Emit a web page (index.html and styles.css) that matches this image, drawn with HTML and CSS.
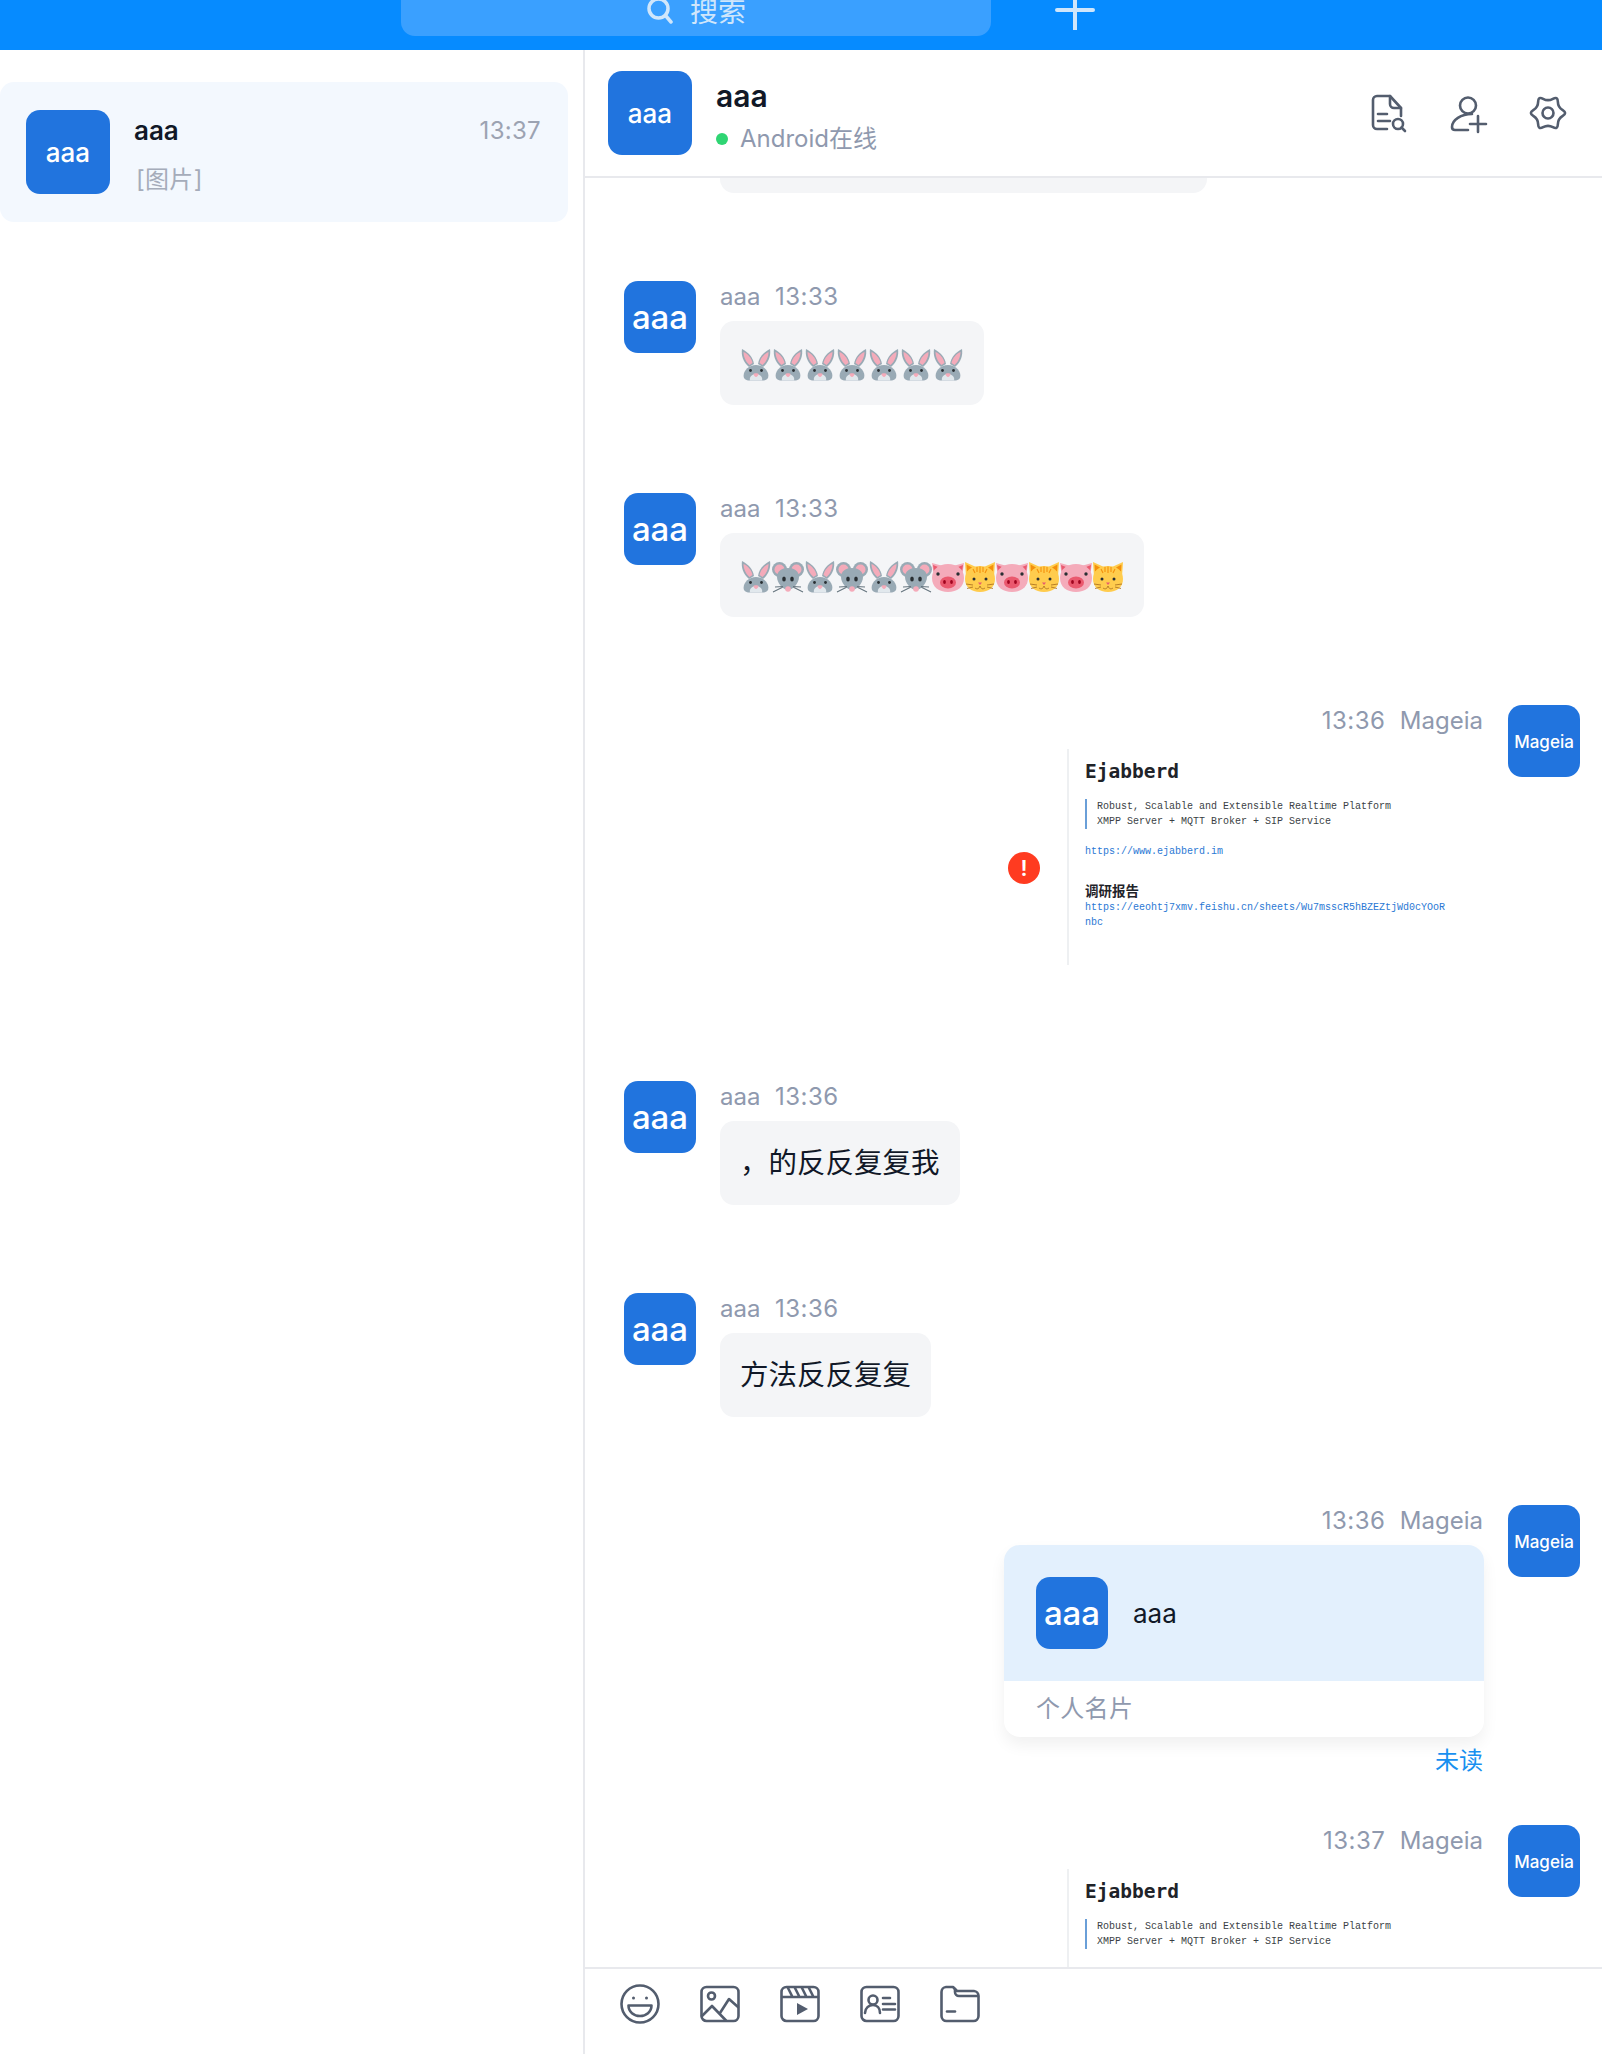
FILE: index.html
```html
<!DOCTYPE html>
<html lang="zh-CN">

<head>
    <meta charset="UTF-8">
    <meta name="viewport" content="width=device-width, initial-scale=1.0">
    <title>aaa</title>
    <link rel="stylesheet" href="styles.css">
</head>

<body>

    <!-- emoji sheet -->
    <svg class="defs" width="0" height="0">
        <symbol id="rabbit" viewBox="0 0 32 32">
            <path d="M2 0C1 6 3 13 9 18L14 15C13 8 8 3 2 0Z" fill="#99AAB5" />
            <path d="M3.5 3C3.5 8 6 13 9.5 16L12.5 14C11.5 9 8 5 3.5 3Z" fill="#F4ABBA" />
            <path d="M30 0C31 6 29 13 23 18L18 15C19 8 24 3 30 0Z" fill="#99AAB5" />
            <path d="M28.500 3C28.500 8 26 13 22.500 16L19.500 14C20.500 9 24 5 28.500 3Z" fill="#F4ABBA" />
            <path d="M4 29C2 23 8 16 16 16C24 16 30 23 28 29C27 31 24 31.500 23 31.500H9C8 31.500 5 31 4 29Z" fill="#99AAB5" />
            <path d="M10 31.500C9 28 12 25 16 25C20 25 23 28 22 31.500Z" fill="#E1E8ED" />
            <path d="M13.500 25C13.500 24 18.500 24 18.500 25C18.500 26.500 17 28 16 28C15 28 13.500 26.500 13.500 25Z" fill="#F4ABBA" />
            <circle cx="10.500" cy="21.500" r="1.400" fill="#292F33" />
            <circle cx="21.500" cy="21.500" r="1.400" fill="#292F33" />
        </symbol>
        <symbol id="mouse" viewBox="0 0 32 32">
            <circle cx="7.500" cy="8.500" r="7.500" fill="#99AAB5" />
            <circle cx="24.500" cy="8.500" r="7.500" fill="#99AAB5" />
            <circle cx="7.500" cy="8.500" r="5" fill="#F4ABBA" />
            <circle cx="24.500" cy="8.500" r="5" fill="#F4ABBA" />
            <path d="M5 16C5 10 10 7 16 7C22 7 27 10 27 16C27 22 21 29 16 29C11 29 5 22 5 16Z" fill="#99AAB5" />
            <ellipse cx="12" cy="18" rx="1.800" ry="2.600" fill="#292F33" />
            <ellipse cx="20" cy="18" rx="1.800" ry="2.600" fill="#292F33" />
            <path d="M1 31L11 26M3 26L11 25.500M31 31L21 26M29 26L21 25.500" stroke="#66757F" stroke-width="1.100" fill="none" />
            <circle cx="16" cy="28" r="2.800" fill="#F4ABBA" />
        </symbol>
        <symbol id="pig" viewBox="0 0 32 32">
            <path d="M0 2L11 5L2 16Z" fill="#F4ABBA" />
            <path d="M32 2L21 5L30 16Z" fill="#F4ABBA" />
            <path d="M1 4L6 6L2 11Z" fill="#EA596E" />
            <path d="M31 4L26 6L30 11Z" fill="#EA596E" />
            <path d="M0 17C0 8 7 3 16 3C25 3 32 8 32 17C32 26 25 31 16 31C7 31 0 26 0 17Z" fill="#F4ABBA" />
            <ellipse cx="16" cy="21.500" rx="8" ry="6" fill="#EA596E" />
            <ellipse cx="12.500" cy="21" rx="1.400" ry="2" fill="#A0041E" />
            <ellipse cx="19.500" cy="21" rx="1.400" ry="2" fill="#A0041E" />
            <circle cx="6" cy="13" r="1.700" fill="#292F33" />
            <circle cx="26" cy="13" r="1.700" fill="#292F33" />
        </symbol>
        <symbol id="cat" viewBox="0 0 32 32">
            <path d="M1 1L12 6L2 16Z" fill="#FFCC4D" />
            <path d="M31 1L20 6L30 16Z" fill="#FFCC4D" />
            <path d="M2.500 3.500L8 6.500L3 11Z" fill="#F4900C" />
            <path d="M29.500 3.500L24 6.500L29 11Z" fill="#F4900C" />
            <path d="M1 18C1 10 7 5 16 5C25 5 31 10 31 18C31 26 25 31 16 31C7 31 1 26 1 18Z" fill="#FFCC4D" />
            <path d="M13 6V11M16 5.500V12M19 6V11M9 8L11 12M23 8L21 12" stroke="#F4900C" stroke-width="1.100" fill="none" />
            <circle cx="10" cy="18" r="1.500" fill="#292F33" />
            <circle cx="22" cy="18" r="1.500" fill="#292F33" />
            <path d="M14 21.500H18L16 24Z" fill="#E75A70" />
            <path d="M11 27C13 28.500 15 28 16 25C17 28 19 28.500 21 27M2 23L9 24M3 27.500L9 26M30 23L23 24M29 27.500L23 26" stroke="#A66B1E" stroke-width="0.800" fill="none" />
        </symbol>
    </svg>

    <div class="topbar">
        <div class="search">
            <svg class="search-icon" viewBox="0 0 28 28" width="28" height="28">
                <circle cx="12.500" cy="12.500" r="9.500" />
                <path d="M19.500 19.500L25 26" />
            </svg>
            <span>搜索</span>
        </div>
        <svg class="plus" viewBox="0 0 40 40" width="40" height="40">
            <path d="M2 20H38M20 0V40" />
        </svg>
    </div>

    <div class="app">
        <div class="sidebar">
            <div class="conv">
                <div class="avatar avatar-big">aaa</div>
                <div class="conv-body">
                    <div class="conv-top">
                        <span class="conv-name">aaa</span>
                        <span class="conv-time">13:37</span>
                    </div>
                    <div class="conv-preview">[图片]</div>
                </div>
            </div>
        </div>

        <div class="chat">
            <div class="chat-head">
                <div class="avatar avatar-big">aaa</div>
                <div class="chat-title">
                    <div class="chat-name">aaa</div>
                    <div class="chat-status"><i class="dot"></i>Android在线</div>
                </div>
                <div class="head-tools">
                    <svg class="icon" viewBox="0 0 40 40" width="40" height="40">
                        <path d="M19 36H9A4 4 0 0 1 5 32V7A4 4 0 0 1 9 3H22L33 15V23" />
                        <path d="M22 3V11A4 4 0 0 0 26 15H33" />
                        <path d="M10 21H19M10 28H22" />
                        <circle cx="30" cy="31" r="5" />
                        <path d="M33.500 34.500L37 38" />
                    </svg>
                    <svg class="icon" viewBox="0 0 40 40" width="40" height="40">
                        <circle cx="20" cy="12.500" r="8" />
                        <path d="M24 21C13 21 4 27 4 34C4 36 5 37 7 37H20" />
                        <path d="M22 31H38M30 23V39" />
                    </svg>
                    <svg class="icon" viewBox="0 0 40 40" width="40" height="40">
                        <path d="M15.125 5.805Q20 8.500 24.875 5.805Q29.750 3.110 29.855 8.680Q29.960 14.250 34.730 17.125Q39.500 20 34.730 22.875Q29.960 25.750 29.855 31.320Q29.750 36.890 24.875 34.195Q20 31.500 15.125 34.195Q10.250 36.890 10.145 31.320Q10.040 25.750 5.270 22.875Q0.500 20 5.270 17.125Q10.040 14.250 10.145 8.680Q10.250 3.110 15.125 5.805Z" />
                        <circle cx="20" cy="20" r="5.500" />
                    </svg>
                </div>
            </div>

            <div class="messages">
                <div class="bubble-cut"></div>

                <div class="msg">
                    <div class="avatar">aaa</div>
                    <div class="msg-body">
                        <div class="msg-meta"><span>aaa</span><span class="msg-time">13:33</span></div>
                        <div class="bubble emoji-row">
                            <svg class="emoji"><use href="#rabbit" /></svg>
                            <svg class="emoji"><use href="#rabbit" /></svg>
                            <svg class="emoji"><use href="#rabbit" /></svg>
                            <svg class="emoji"><use href="#rabbit" /></svg>
                            <svg class="emoji"><use href="#rabbit" /></svg>
                            <svg class="emoji"><use href="#rabbit" /></svg>
                            <svg class="emoji"><use href="#rabbit" /></svg>
                        </div>
                    </div>
                </div>

                <div class="msg">
                    <div class="avatar">aaa</div>
                    <div class="msg-body">
                        <div class="msg-meta"><span>aaa</span><span class="msg-time">13:33</span></div>
                        <div class="bubble emoji-row">
                            <svg class="emoji"><use href="#rabbit" /></svg>
                            <svg class="emoji"><use href="#mouse" /></svg>
                            <svg class="emoji"><use href="#rabbit" /></svg>
                            <svg class="emoji"><use href="#mouse" /></svg>
                            <svg class="emoji"><use href="#rabbit" /></svg>
                            <svg class="emoji"><use href="#mouse" /></svg>
                            <svg class="emoji"><use href="#pig" /></svg>
                            <svg class="emoji"><use href="#cat" /></svg>
                            <svg class="emoji"><use href="#pig" /></svg>
                            <svg class="emoji"><use href="#cat" /></svg>
                            <svg class="emoji"><use href="#pig" /></svg>
                            <svg class="emoji"><use href="#cat" /></svg>
                        </div>
                    </div>
                </div>

                <div class="msg msg-mine">
                    <div class="avatar avatar-mine">Mageia</div>
                    <div class="msg-body">
                        <div class="msg-meta"><span class="msg-time">13:36</span><span>Mageia</span></div>
                        <div class="shot-row">
                            <div class="error">!</div>
                            <div class="shot">
                                <div class="shot-title">Ejabberd</div>
                                <div class="shot-quote">
                                    Robust, Scalable and Extensible Realtime Platform<br>
                                    XMPP Server + MQTT Broker + SIP Service
                                </div>
                                <div class="shot-link shot-link-first">https://www.ejabberd.im</div>
                                <div class="shot-head">调研报告</div>
                                <div class="shot-link">https://eeohtj7xmv.feishu.cn/sheets/Wu7msscR5hBZEZtjWd0cYOoRnbc</div>
                            </div>
                        </div>
                    </div>
                </div>

                <div class="msg">
                    <div class="avatar">aaa</div>
                    <div class="msg-body">
                        <div class="msg-meta"><span>aaa</span><span class="msg-time">13:36</span></div>
                        <div class="bubble">，的反反复复我</div>
                    </div>
                </div>

                <div class="msg">
                    <div class="avatar">aaa</div>
                    <div class="msg-body">
                        <div class="msg-meta"><span>aaa</span><span class="msg-time">13:36</span></div>
                        <div class="bubble">方法反反复复</div>
                    </div>
                </div>

                <div class="msg msg-mine msg-read">
                    <div class="avatar avatar-mine">Mageia</div>
                    <div class="msg-body">
                        <div class="msg-meta"><span class="msg-time">13:36</span><span>Mageia</span></div>
                        <div class="card">
                            <div class="card-top">
                                <div class="avatar">aaa</div>
                                <div class="card-name">aaa</div>
                            </div>
                            <div class="card-foot">个人名片</div>
                        </div>
                        <div class="unread">未读</div>
                    </div>
                </div>

                <div class="msg msg-mine">
                    <div class="avatar avatar-mine">Mageia</div>
                    <div class="msg-body">
                        <div class="msg-meta"><span class="msg-time">13:37</span><span>Mageia</span></div>
                        <div class="shot-row">
                            <div class="shot">
                                <div class="shot-title">Ejabberd</div>
                                <div class="shot-quote">
                                    Robust, Scalable and Extensible Realtime Platform<br>
                                    XMPP Server + MQTT Broker + SIP Service
                                </div>
                            </div>
                        </div>
                    </div>
                </div>
            </div>

            <div class="toolbar">
                <svg class="icon" viewBox="0 0 40 40" width="40" height="40">
                    <circle cx="20" cy="20" r="18.500" />
                    <path d="M8.500 21.500H31.500C31.500 28 26 32 20 32C14 32 8.500 28 8.500 21.500Z" />
                    <circle class="solid" cx="13.500" cy="14" r="1.500" />
                    <circle class="solid" cx="26.500" cy="14" r="1.500" />
                </svg>
                <svg class="icon" viewBox="0 0 40 40" width="40" height="40">
                    <rect x="1.500" y="3" width="37" height="34" rx="5" />
                    <circle cx="11.500" cy="12" r="3.500" />
                    <path d="M2 32L12 22L26 36.500" />
                    <path d="M20 29L29 15L38 23" />
                </svg>
                <svg class="icon" viewBox="0 0 40 40" width="40" height="40">
                    <rect x="1.500" y="3" width="37" height="34" rx="5" />
                    <path d="M2 13H38M8 4L12 12M15 4L19 12M22 4L26 12M29 4L33 12" />
                    <path class="solid" d="M17 19L28 25L17 31Z" />
                </svg>
                <svg class="icon" viewBox="0 0 40 40" width="40" height="40">
                    <rect x="1.500" y="3" width="37" height="34" rx="5" />
                    <circle cx="13" cy="16" r="4.500" />
                    <path d="M5 29C5 24 9 21 13 21C17 21 20 24 20 29" />
                    <path d="M23 14H30M23 20H35M23 25.500H35" />
                </svg>
                <svg class="icon" viewBox="0 0 40 40" width="40" height="40">
                    <path d="M6 3H13L17 7H34A5 5 0 0 1 38.500 12V32A5 5 0 0 1 33.500 37H6.500A5 5 0 0 1 1.500 32V8A5 5 0 0 1 6 3Z" />
                    <path d="M15 5V8A4 4 0 0 0 19 12H38" />
                    <path d="M7 27.500H15" />
                </svg>
            </div>
        </div>
    </div>

</body>

</html>
```

FILE: styles.css
```css
* {
    margin: 0;
    padding: 0;
    box-sizing: border-box;
}

body {
    width: 1602px;
    height: 2054px;
    overflow: hidden;
    background: #fff;
    font-family: Inter, "Noto Sans CJK SC", sans-serif;
    color: #111827;
}

.defs {
    display: block;
    height: 0;
}

/* top bar, cut off by the window edge */
.topbar {
    height: 50px;
    background: #068bff;
    overflow: hidden;
    display: flex;
    align-items: flex-end;
    padding: 0 0 14px 401px;
    gap: 64px;
}

.search {
    width: 590px;
    height: 36px;
    flex-shrink: 0;
    background: #3aa0ff;
    border-radius: 0 0 14px 14px;
    display: flex;
    align-items: flex-start;
    justify-content: center;
    gap: 16px;
    font-size: 28px;
    line-height: 24px;
    color: #cfe6fb;
}

.search-icon {
    margin-top: -4px;
    fill: none;
    stroke: #cfe6fb;
    stroke-width: 3.5;
    stroke-linecap: round;
}

.plus {
    flex-shrink: 0;
    margin-bottom: 6px;
    fill: none;
    stroke: #cfe6fb;
    stroke-width: 4;
    stroke-linecap: round;
}

.app {
    display: flex;
    height: 2004px;
}

.sidebar {
    width: 585px;
    flex-shrink: 0;
    border-right: 2px solid #e8e9ed;
    padding: 32px 15px 0 0;
}

.conv {
    display: flex;
    height: 140px;
    gap: 24px;
    padding: 28px 27px 0 26px;
    background: #f3f8fe;
    border-radius: 14px;
}

.conv-body {
    flex: 1;
}

.conv-top {
    display: flex;
    justify-content: space-between;
    align-items: center;
    height: 40px;
}

.conv-name {
    font-size: 26px;
    font-weight: 600;
}

.conv-time {
    font-size: 24px;
    letter-spacing: 0.3px;
    color: #9ca3b2;
}

.conv-preview {
    margin-top: 12px;
    padding-left: 2px;
    font-size: 24px;
    line-height: 36px;
    letter-spacing: 0.3px;
    color: #a5acba;
}

.avatar {
    width: 72px;
    height: 72px;
    flex-shrink: 0;
    background: #2174de;
    border-radius: 14px;
    color: #fff;
    font-size: 33px;
    font-weight: 500;
    display: flex;
    align-items: center;
    justify-content: center;
}

.avatar-big {
    width: 84px;
    height: 84px;
    font-size: 26px;
}

.avatar-mine {
    font-size: 17px;
    padding-top: 2px;
}

.chat {
    flex: 1;
    display: flex;
    flex-direction: column;
    min-width: 0;
}

.chat-head {
    height: 128px;
    flex-shrink: 0;
    border-bottom: 2px solid #e8e9ed;
    display: flex;
    align-items: center;
    gap: 24px;
    padding: 0 34px 0 23px;
}

.chat-title {
    flex: 1;
    padding-top: 8px;
}

.chat-name {
    font-size: 30px;
    font-weight: 600;
    line-height: 36px;
}

.chat-status {
    margin-top: 8px;
    font-size: 24px;
    line-height: 34px;
    color: #8f99ae;
    display: flex;
    align-items: center;
}

.dot {
    width: 12px;
    height: 12px;
    margin-right: 12px;
    background: #2fd573;
    border-radius: 50%;
}

.head-tools {
    display: flex;
    gap: 40px;
}

.icon {
    display: block;
    fill: none;
    stroke: #535d6e;
    stroke-width: 2.6;
    stroke-linecap: round;
    stroke-linejoin: round;
    overflow: visible;
}

.icon .solid {
    fill: #535d6e;
    stroke: none;
}

.messages {
    flex: 1;
    min-height: 0;
    overflow: hidden;
    padding: 0 22px 0 39px;
}

.bubble-cut {
    width: 487px;
    height: 15px;
    margin: 0 0 88px 96px;
    background: #f4f5f7;
    border-radius: 0 0 14px 14px;
}

.msg {
    display: flex;
    gap: 24px;
    margin-bottom: 88px;
}

.msg-read {
    margin-bottom: 47px;
}

.msg-mine {
    flex-direction: row-reverse;
    gap: 25px;
}

.msg-body {
    flex: 1;
    min-width: 0;
    display: flex;
    flex-direction: column;
    align-items: flex-start;
}

.msg-mine .msg-body {
    align-items: flex-end;
}

.msg-meta {
    height: 40px;
    padding-bottom: 10px;
    display: flex;
    align-items: center;
    gap: 14.5px;
    font-size: 24px;
    color: #8f99ae;
}

.msg-time {
    letter-spacing: 0.5px;
}

.bubble {
    padding: 20px;
    background: #f4f5f7;
    border-radius: 14px;
    font-size: 28.5px;
    line-height: 44px;
}

.emoji-row {
    display: flex;
    padding: 28px 20px 24px;
}

.emoji {
    display: block;
    width: 32px;
    height: 32px;
}

.shot-row {
    display: flex;
    align-items: center;
    gap: 27px;
    height: 248px;
    padding-top: 4px;
}

.error {
    width: 32px;
    height: 32px;
    margin-bottom: 6px;
    background: #ff3b20;
    border-radius: 50%;
    color: #fff;
    font-size: 22px;
    font-weight: 600;
    display: flex;
    align-items: center;
    justify-content: center;
}

.shot {
    width: 416px;
    height: 216px;
    align-self: flex-start;
    border-left: 2px solid #eef0f2;
    padding: 11px 0 0 16px;
    font-family: "Liberation Mono", "Noto Sans CJK SC", monospace;
    font-size: 10px;
    line-height: 15px;
    color: #3b3f45;
}

.shot-title {
    font-family: "DejaVu Sans Mono", monospace;
    font-size: 19.5px;
    font-weight: 700;
    line-height: 24px;
    color: #1f2329;
}

.shot-quote {
    margin-top: 15px;
    border-left: 2px solid #6a9fd8;
    padding-left: 10px;
}

.shot-link {
    width: 362px;
    color: #2a78d4;
    word-break: break-all;
}

.shot-link-first {
    margin-top: 15px;
}

.shot-head {
    margin-top: 22px;
    margin-bottom: 1px;
    font-family: "Noto Sans CJK SC", sans-serif;
    font-size: 13.5px;
    font-weight: 700;
    line-height: 18px;
    color: #1f2329;
}

.card {
    width: 480px;
    margin-right: -1px;
    background: #fff;
    border-radius: 16px;
    box-shadow: 0 8px 16px rgba(0, 0, 0, 0.06);
    overflow: hidden;
}

.card-top {
    height: 136px;
    background: #e3f0fd;
    display: flex;
    align-items: center;
    gap: 25px;
    padding: 0 32px;
}

.card-name {
    font-size: 26px;
}

.card-foot {
    height: 56px;
    padding: 0 32px;
    font-size: 24px;
    line-height: 56px;
    letter-spacing: 0.3px;
    color: #8f99ae;
}

.unread {
    margin-top: 7px;
    font-size: 24px;
    line-height: 34px;
    color: #1890f0;
}

.toolbar {
    height: 87px;
    flex-shrink: 0;
    border-top: 2px solid #e8e9ed;
    display: flex;
    gap: 40px;
    padding: 15px 0 0 35px;
}
```
